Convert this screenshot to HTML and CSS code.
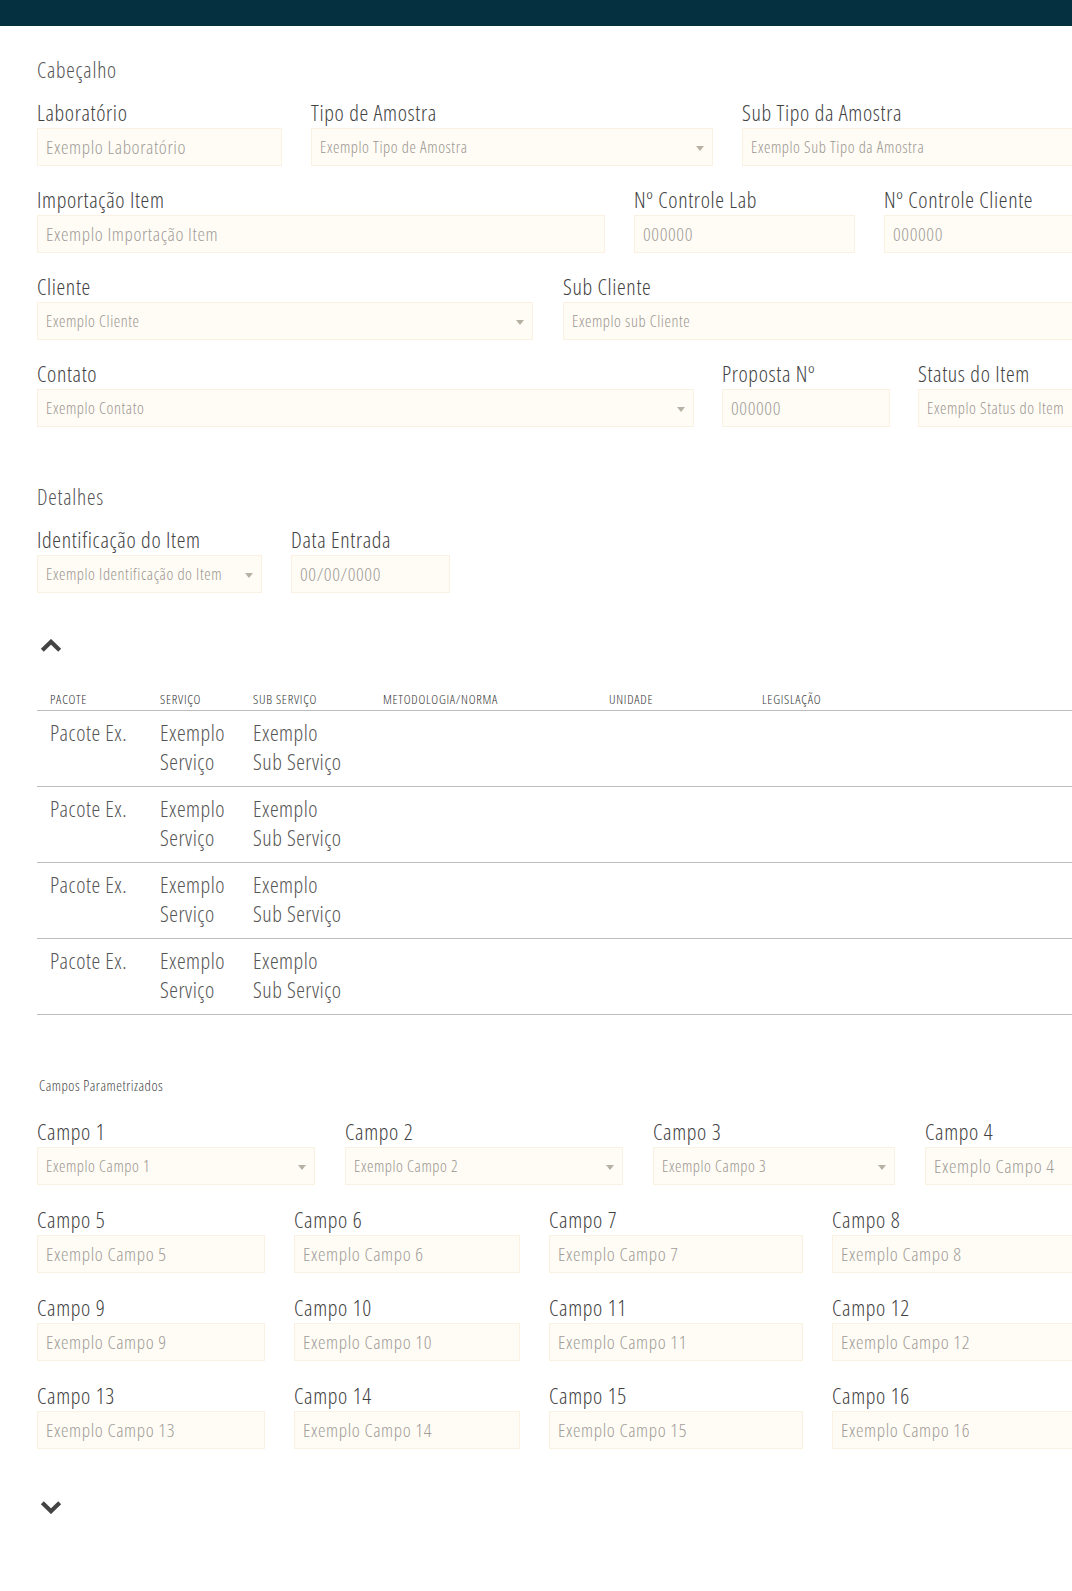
FILE: index.html
```html
<!DOCTYPE html>
<html lang="pt-BR">
<head>
<meta charset="utf-8">
<title>Item</title>
<link rel="stylesheet" href="styles.css">
</head>
<body>
<header class="topbar"></header>
<main class="page">
  <section class="section">
    <h2 class="section-title">Cabeçalho</h2>
    <div class="form-row cab-1">
      <div class="field"><label>Laboratório</label><input class="input" placeholder="Exemplo Laboratório"></div>
      <div class="field"><label>Tipo de Amostra</label><div class="select"><span>Exemplo Tipo de Amostra</span></div></div>
      <div class="field"><label>Sub Tipo da Amostra</label><div class="select"><span>Exemplo Sub Tipo da Amostra</span></div></div>
    </div>
    <div class="form-row cab-2">
      <div class="field"><label>Importação Item</label><input class="input" placeholder="Exemplo Importação Item"></div>
      <div class="field"><label>Nº Controle Lab</label><input class="input" placeholder="000000"></div>
      <div class="field"><label>Nº Controle Cliente</label><input class="input" placeholder="000000"></div>
    </div>
    <div class="form-row cab-3">
      <div class="field"><label>Cliente</label><div class="select"><span>Exemplo Cliente</span></div></div>
      <div class="field"><label>Sub Cliente</label><div class="select"><span>Exemplo sub Cliente</span></div></div>
    </div>
    <div class="form-row cab-4">
      <div class="field"><label>Contato</label><div class="select"><span>Exemplo Contato</span></div></div>
      <div class="field"><label>Proposta Nº</label><input class="input" placeholder="000000"></div>
      <div class="field"><label>Status do Item</label><div class="select"><span>Exemplo Status do Item</span></div></div>
    </div>
  </section>

  <section class="section details">
    <h2 class="section-title">Detalhes</h2>
    <div class="form-row det-1">
      <div class="field"><label>Identificação do Item</label><div class="select"><span>Exemplo Identificação do Item</span></div></div>
      <div class="field"><label>Data Entrada</label><input class="input" placeholder="00/00/0000"></div>
    </div>
  </section>

  <button class="toggle toggle-up" aria-label="Recolher">
    <svg width="22" height="13" viewBox="0 0 22 13"><path d="M2.3 11.2 L11 2.8 L19.7 11.2" fill="none" stroke="#444" stroke-width="4.2"/></svg>
  </button>

  <table class="services">
    <colgroup>
      <col class="c-pacote"><col class="c-servico"><col class="c-sub"><col class="c-met"><col class="c-uni"><col>
    </colgroup>
    <thead>
      <tr><th>Pacote</th><th>Serviço</th><th>Sub Serviço</th><th>Metodologia/Norma</th><th>Unidade</th><th>Legislação</th></tr>
    </thead>
    <tbody>
      <tr><td>Pacote Ex.</td><td>Exemplo Serviço</td><td>Exemplo<br>Sub Serviço</td><td></td><td></td><td></td></tr>
      <tr><td>Pacote Ex.</td><td>Exemplo Serviço</td><td>Exemplo<br>Sub Serviço</td><td></td><td></td><td></td></tr>
      <tr><td>Pacote Ex.</td><td>Exemplo Serviço</td><td>Exemplo<br>Sub Serviço</td><td></td><td></td><td></td></tr>
      <tr><td>Pacote Ex.</td><td>Exemplo Serviço</td><td>Exemplo<br>Sub Serviço</td><td></td><td></td><td></td></tr>
    </tbody>
  </table>

  <section class="section params">
    <h3 class="small-title">Campos Parametrizados</h3>
    <div class="form-row par-1">
      <div class="field"><label>Campo 1</label><div class="select"><span>Exemplo Campo 1</span></div></div>
      <div class="field"><label>Campo 2</label><div class="select"><span>Exemplo Campo 2</span></div></div>
      <div class="field"><label>Campo 3</label><div class="select"><span>Exemplo Campo 3</span></div></div>
      <div class="field"><label>Campo 4</label><input class="input" placeholder="Exemplo Campo 4"></div>
    </div>
    <div class="form-row par-n">
      <div class="field"><label>Campo 5</label><input class="input" placeholder="Exemplo Campo 5"></div>
      <div class="field"><label>Campo 6</label><input class="input" placeholder="Exemplo Campo 6"></div>
      <div class="field"><label>Campo 7</label><input class="input" placeholder="Exemplo Campo 7"></div>
      <div class="field"><label>Campo 8</label><input class="input" placeholder="Exemplo Campo 8"></div>
    </div>
    <div class="form-row par-n">
      <div class="field"><label>Campo 9</label><input class="input" placeholder="Exemplo Campo 9"></div>
      <div class="field"><label>Campo 10</label><input class="input" placeholder="Exemplo Campo 10"></div>
      <div class="field"><label>Campo 11</label><input class="input" placeholder="Exemplo Campo 11"></div>
      <div class="field"><label>Campo 12</label><input class="input" placeholder="Exemplo Campo 12"></div>
    </div>
    <div class="form-row par-n">
      <div class="field"><label>Campo 13</label><input class="input" placeholder="Exemplo Campo 13"></div>
      <div class="field"><label>Campo 14</label><input class="input" placeholder="Exemplo Campo 14"></div>
      <div class="field"><label>Campo 15</label><input class="input" placeholder="Exemplo Campo 15"></div>
      <div class="field"><label>Campo 16</label><input class="input" placeholder="Exemplo Campo 16"></div>
    </div>
  </section>

  <button class="toggle toggle-down" aria-label="Expandir">
    <svg width="22" height="13" viewBox="0 0 22 13"><path d="M2.3 1.8 L11 10.2 L19.7 1.8" fill="none" stroke="#444" stroke-width="4.2"/></svg>
  </button>
</main>
</body>
</html>
```
FILE: styles.css
```css
html, body {
  margin: 0;
  padding: 0;
  overflow-x: hidden;
  background: #ffffff;
}

body {
  font-family: "Open Sans", "Liberation Sans Narrow", "DejaVu Sans Condensed", sans-serif;
  font-stretch: 75%;
  font-weight: 300;
  color: #444;
}

.topbar {
  height: 26px;
  background: #04303f;
}

.page {
  width: 1180px;
  padding: 30px 0 80px 37px;
  box-sizing: content-box;
}

.section-title {
  margin: 0 0 16px;
  font-size: 21.5px;
  line-height: 28px;
  font-weight: 300;
  letter-spacing: 0.8px;
  color: #555;
}

.details {
  margin-top: 56px;
}

.form-row {
  display: grid;
  column-gap: 29px;
  margin-bottom: 21px;
}
.form-row:last-child { margin-bottom: 0; }
.params .form-row { margin-bottom: 22px; }
.params .form-row:last-child { margin-bottom: 0; }

.cab-1 { grid-template-columns: 245px 402px 1fr; }
.cab-2 { grid-template-columns: 568px 221px 1fr; }
.cab-3 { grid-template-columns: 496px 1fr; column-gap: 30px; }
.cab-4 { grid-template-columns: 657px 168px 1fr; column-gap: 28px; }
.det-1 { grid-template-columns: 225px 159px; }
.par-1 { grid-template-columns: 278px 278px 242px 1fr; column-gap: 30px; }
.par-n { grid-template-columns: 228px 226px 254px 1fr; column-gap: 29px; }

.field {
  display: flex;
  flex-direction: column;
  min-width: 0;
}

.field label {
  font-size: 22px;
  line-height: 25px;
  padding-bottom: 3px;
  letter-spacing: 0.65px;
  color: #424242;
  white-space: nowrap;
}

.input, .select {
  height: 38px;
  box-sizing: border-box;
  background: #fffcf5;
  border: 1px solid #faf1e3;
  margin: 0;
  padding: 0 8px;
  font-family: inherit;
  font-stretch: 75%;
  font-weight: 300;
  outline: none;
}

.input {
  font-size: 19px;
  letter-spacing: 0.6px;
  color: #444;
  width: 100%;
}
.input::placeholder {
  color: #a19d99;
  opacity: 1;
}

.select {
  position: relative;
  display: flex;
  align-items: center;
  font-size: 16.3px;
  letter-spacing: 0.57px;
  color: #9a9690;
  white-space: nowrap;
  overflow: hidden;
}
.select::after {
  content: "";
  position: absolute;
  right: 8px;
  top: 17px;
  border-left: 4px solid transparent;
  border-right: 4px solid transparent;
  border-top: 5px solid #b7b0a5;
}

.toggle {
  display: block;
  margin: 0;
  padding: 0;
  border: 0;
  background: none;
  width: 22px;
  height: 13px;
  line-height: 0;
  margin-left: 3px;
}
.toggle svg { display: block; }
.toggle-up { margin-top: 46px; }
.toggle-down { margin-top: 52px; }

.services {
  margin-top: 35px;
  width: 100%;
  border-collapse: collapse;
  table-layout: fixed;
}
.c-pacote { width: 110px; }
.c-servico { width: 93px; }
.c-sub { width: 130px; }
.c-met { width: 226px; }
.c-uni { width: 153px; }

.services th {
  text-align: left;
  font-size: 13px;
  line-height: 16px;
  font-weight: 300;
  letter-spacing: 0.75px;
  text-transform: uppercase;
  color: #333;
  padding: 4px 0 3px 13px;
  border-bottom: 1px solid #bdbdbd;
}
.services td {
  vertical-align: top;
  font-size: 22px;
  line-height: 29px;
  letter-spacing: 0.5px;
  color: #555;
  padding: 7px 0 10px 13px;
  border-bottom: 1px solid #bdbdbd;
}

.params {
  margin-top: 61px;
}
.small-title {
  margin: 0 0 23px;
  font-size: 14.5px;
  line-height: 20px;
  font-weight: 300;
  letter-spacing: 0.5px;
  color: #444;
  padding-left: 2px;
}
```
